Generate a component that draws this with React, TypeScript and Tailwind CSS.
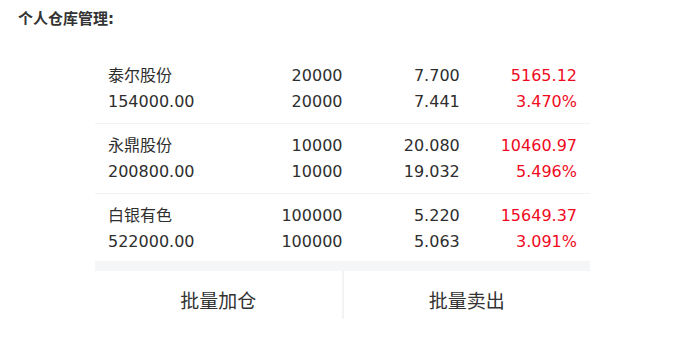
const holdings = [
  { name: "泰尔股份", cost: "154000.00", qty: "20000", avail: "20000", price: "7.700", avg: "7.441", profit: "5165.12", rate: "3.470%" },
  { name: "永鼎股份", cost: "200800.00", qty: "10000", avail: "10000", price: "20.080", avg: "19.032", profit: "10460.97", rate: "5.496%" },
  { name: "白银有色", cost: "522000.00", qty: "100000", avail: "100000", price: "5.220", avg: "5.063", profit: "15649.37", rate: "3.091%" },
];

export default function App() {
  return (
    <div className="w-[687px] h-[342px] bg-white font-['DejaVu_Sans','Noto_Sans_CJK_SC',sans-serif] text-[#2e2e2e]">
      <div className="px-[18px] pt-[9px] h-[54px] text-[15px] leading-5 font-bold text-[#333]">个人仓库管理:</div>
      <div className="mx-[95px] w-[495px]">
        {holdings.map((h, i) => (
          <div
            key={h.name}
            className={
              i < holdings.length - 1
                ? "grid grid-cols-4 px-[13px] pt-[9px] pb-[8px] text-[16px] leading-[26px] border-b border-[#f3f3f3]"
                : "grid grid-cols-4 px-[13px] pt-[9px] pb-[6px] text-[16px] leading-[26px]"
            }
          >
            <span>{h.name}</span>
            <span className="text-right">{h.qty}</span>
            <span className="text-right">{h.price}</span>
            <span className="text-right text-[#f00a1e]">{h.profit}</span>
            <span>{h.cost}</span>
            <span className="text-right">{h.avail}</span>
            <span className="text-right">{h.avg}</span>
            <span className="text-right text-[#f00a1e]">{h.rate}</span>
          </div>
        ))}
        <div className="h-[10px] bg-[#f5f6f8]" />
        <div className="flex">
          <button className="flex-1 h-[59px] flex items-center justify-center text-[19px] text-[#333] font-['Noto_Sans_CJK_SC',sans-serif]">
            批量加仓
          </button>
          <div className="w-[2px] h-[48px] bg-[#f3f3f3]" />
          <button className="flex-1 h-[59px] flex items-center justify-center text-[19px] text-[#333] font-['Noto_Sans_CJK_SC',sans-serif]">
            批量卖出
          </button>
        </div>
      </div>
    </div>
  );
}
